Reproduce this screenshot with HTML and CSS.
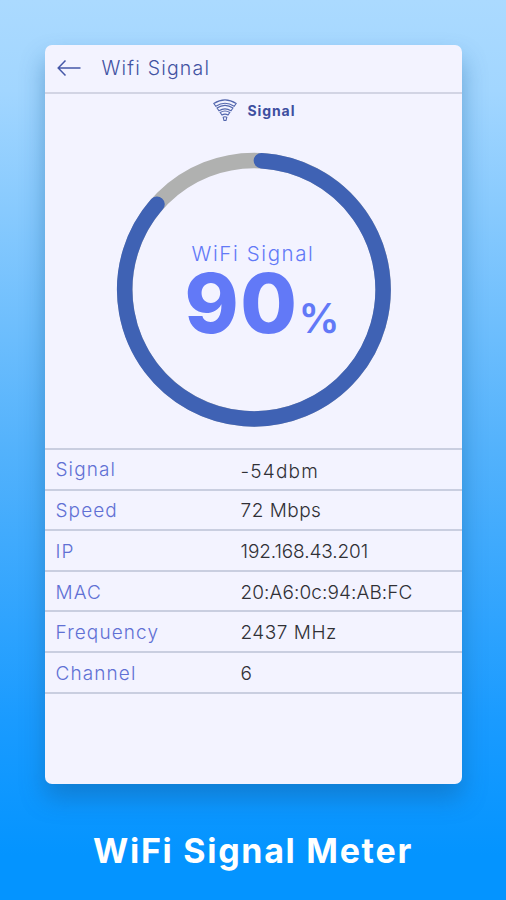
FILE: index.html
```html
<!DOCTYPE html>
<html lang="en">
<head>
    <meta charset="UTF-8">
    <meta name="viewport" content="width=device-width, initial-scale=1.0">
    <title>WiFi Signal Meter</title>
    <link rel="stylesheet" href="styles.css">
</head>
<body>
    <main class="phone">
        <header class="top-bar">
            <svg class="back-icon" viewBox="0 0 24 18">
                <path d="M23.5 9H1.5M8.5 1.5L1.2 9l7.3 7.5"/>
            </svg>
            <h1>Wifi Signal</h1>
        </header>
        <section class="meter">
            <div class="tab">
                <svg class="wifi-icon" viewBox="0 0 24 23">
                    <path d="M0.800 4.500Q12-2.800 23.200 4.500L21.200 7.300Q12 1.200 2.800 7.300Z"/>
                    <path d="M4 9Q12 3.800 20 9L18 11.800Q12 8 6 11.800Z"/>
                    <path d="M7.200 13.500Q12 10.500 16.800 13.500L15 16Q12 14.200 9 16Z"/>
                    <path d="M10.200 18.300Q12 17.300 13.800 18.300L13 21.500H11Z"/>
                </svg>
                <span>Signal</span>
            </div>
            <div class="gauge">
                <svg class="ring" viewBox="0 0 276 276">
                    <circle class="ring-track" cx="138" cy="137.700" r="129.200"/>
                    <path class="ring-value" d="M145.400 8.700A129.200 129.200 0 1 1 41 52.200"/>
                </svg>
                <div class="reading">
                    <p class="reading-label">WiFi Signal</p>
                    <p class="reading-value">90<span class="percent">%</span></p>
                </div>
            </div>
        </section>
        <dl class="details">
            <div class="row row-first"><dt>Signal</dt><dd class="v-signal">-54dbm</dd></div>
            <div class="row"><dt>Speed</dt><dd>72 Mbps</dd></div>
            <div class="row"><dt>IP</dt><dd class="v-ip">192.168.43.201</dd></div>
            <div class="row"><dt>MAC</dt><dd class="v-mac">20:A6:0c:94:AB:FC</dd></div>
            <div class="row"><dt>Frequency</dt><dd>2437 MHz</dd></div>
            <div class="row"><dt>Channel</dt><dd>6</dd></div>
        </dl>
    </main>
    <h2 class="caption">WiFi Signal Meter</h2>
</body>
</html>
```

FILE: styles.css
```css
* {
    margin: 0;
    padding: 0;
    box-sizing: border-box;
}

body {
    height: 900px;
    padding-top: 45px;
    display: flex;
    flex-direction: column;
    align-items: center;
    font-family: Inter, 'Open Sans', sans-serif;
    background: linear-gradient(#abdaff 0, #a2d6ff 10%, #53b2fc 50%, #1a9bff 80%, #0494ff 95%);
    overflow: hidden;
}

svg {
    display: block;
    fill: none;
}

.phone {
    width: 417px;
    height: 739px;
    border-radius: 7px;
    background-color: #f3f3ff;
    box-shadow: 0 14px 24px rgba(20, 90, 150, 0.42);
}

.top-bar {
    height: 49px;
    padding: 0 11px 2px 12px;
    display: flex;
    align-items: center;
    gap: 21px;
    border-bottom: 2px solid #d2d4e4;
}

.back-icon {
    width: 24px;
    height: 18px;
    stroke: #4658a8;
    stroke-width: 1.5;
}

h1 {
    font-size: 19.500px;
    font-weight: 300;
    letter-spacing: 1.2px;
    color: #4252a2;
}

.meter {
    height: 354px;
}

.tab {
    height: 33px;
    padding-left: 168px;
    display: flex;
    align-items: center;
    gap: 11px;
    font-size: 14px;
    font-weight: 700;
    letter-spacing: 0.9px;
    line-height: 16px;
    color: #3e4fa0;
}

.wifi-icon {
    width: 24px;
    height: 23px;
    stroke: #5266ad;
    stroke-width: 1.1;
}

.gauge {
    width: 276px;
    height: 276px;
    margin: 25px 0 0 71px;
    display: grid;
}

.ring,
.reading {
    grid-area: 1 / 1;
}

.ring {
    width: 276px;
    height: 276px;
    stroke-width: 15.500;
}

.ring-track {
    stroke: #b0b1b0;
}

.ring-value {
    stroke: #3f62b4;
    stroke-linecap: round;
}

.reading {
    padding: 89px 0 0 69px;
    color: #6279f7;
    white-space: nowrap;
}

.reading-label {
    padding-left: 7px;
    font-size: 20.500px;
    font-weight: 300;
    line-height: 25px;
    letter-spacing: 1.6px;
}

.reading-value {
    font-size: 82px;
    font-weight: 800;
    line-height: 76px;
    letter-spacing: 1.5px;
}

.percent {
    font-size: 41px;
    font-weight: 600;
    letter-spacing: 0;
}

.details {
    border-top: 2px solid #c9cee0;
}

.row {
    height: 40.600px;
    display: grid;
    grid-template-columns: 185px 1fr;
    align-items: center;
    padding: 2px 0 0 11px;
    border-bottom: 2px solid #c9cee0;
    font-size: 19px;
    font-weight: 300;
}

.row dt {
    color: #6070d4;
    letter-spacing: 1.1px;
}

.row dd {
    color: #303036;
    letter-spacing: 0.5px;
}

.row .v-signal {
    letter-spacing: 1.2px;
}

.row .v-ip {
    letter-spacing: -0.1px;
}

.row .v-mac {
    letter-spacing: 0.1px;
}

.row-first dt {
    padding-bottom: 2px;
}

.row-first dd {
    padding-top: 3px;
}

.caption {
    margin-top: 46px;
    font-size: 34px;
    font-weight: 700;
    line-height: 42px;
    letter-spacing: 1.7px;
    color: #fff;
}
```
